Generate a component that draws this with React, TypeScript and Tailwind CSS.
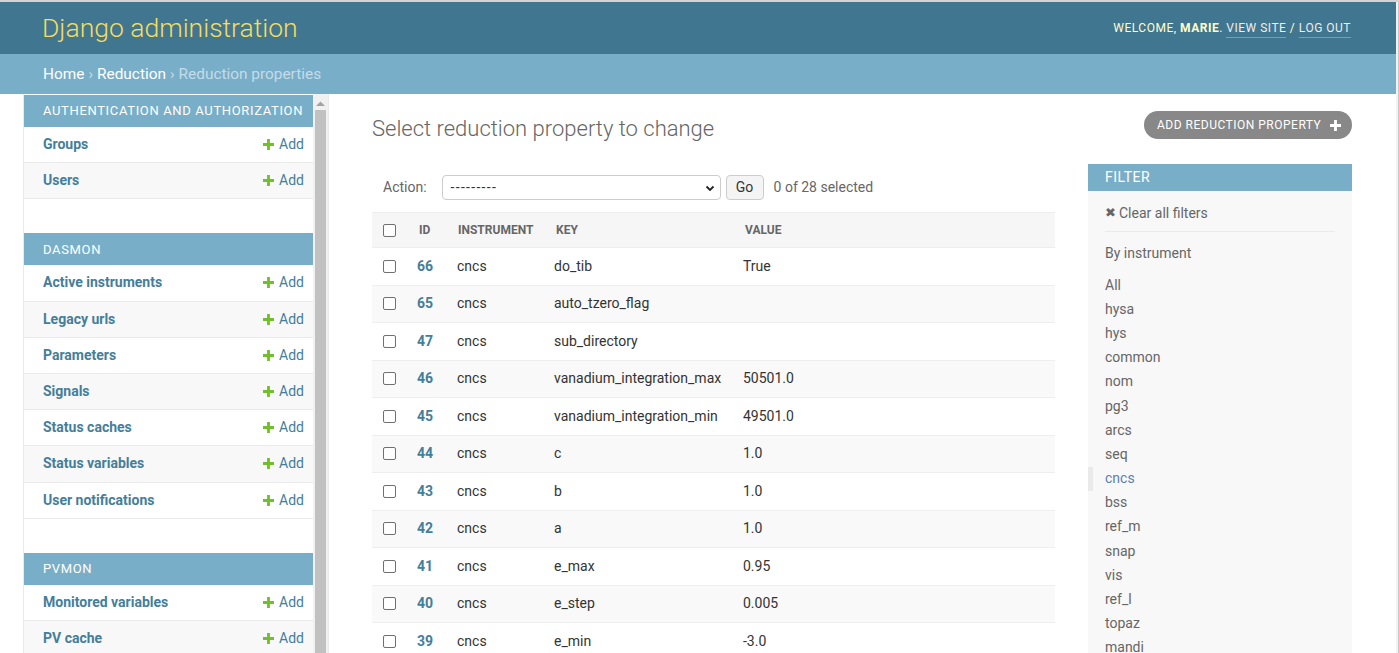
import React from "react";

const Plus = ({ color = "#70bf2b", size = 11 }: { color?: string; size?: number }) => (
  <svg width={size} height={size} viewBox="0 0 14 14" className="shrink-0">
    <path d="M5.2 0h3.6v5.2H14v3.6H8.8V14H5.2V8.8H0V5.2h5.2z" fill={color} />
  </svg>
);

const Box = () => (
  <span className="block w-[13px] h-[13px] border border-[#707070] rounded-[2px] bg-white" />
);

type Mod = { title: string; rows: string[] };
const modules: Mod[] = [
  { title: "Authentication and Authorization", rows: ["Groups", "Users"] },
  {
    title: "Dasmon",
    rows: [
      "Active instruments",
      "Legacy urls",
      "Parameters",
      "Signals",
      "Status caches",
      "Status variables",
      "User notifications",
    ],
  },
  { title: "Pvmon", rows: ["Monitored variables", "PV cache"] },
];

const rows: [string, string, string, string][] = [
  ["66", "cncs", "do_tib", "True"],
  ["65", "cncs", "auto_tzero_flag", ""],
  ["47", "cncs", "sub_directory", ""],
  ["46", "cncs", "vanadium_integration_max", "50501.0"],
  ["45", "cncs", "vanadium_integration_min", "49501.0"],
  ["44", "cncs", "c", "1.0"],
  ["43", "cncs", "b", "1.0"],
  ["42", "cncs", "a", "1.0"],
  ["41", "cncs", "e_max", "0.95"],
  ["40", "cncs", "e_step", "0.005"],
  ["39", "cncs", "e_min", "-3.0"],
];

const filters = [
  "All",
  "hysa",
  "hys",
  "common",
  "nom",
  "pg3",
  "arcs",
  "seq",
  "cncs",
  "bss",
  "ref_m",
  "snap",
  "vis",
  "ref_l",
  "topaz",
  "mandi",
];

export default function App() {
  return (
    <div className="w-[1399px] h-[653px] overflow-hidden bg-white font-[Roboto,'Liberation_Sans',sans-serif] border-t-2 border-[#d4d4d4] flex">
      <div className="w-[1396px] shrink-0 flex flex-col">
        {/* header */}
        <div className="h-[52px] shrink-0 bg-[#417690] flex items-center justify-between pl-[42px] pr-[45px]">
          <div className="text-[26.5px] font-light text-[#f5dd5d] leading-none">Django administration</div>
          <div className="text-[12px] tracking-[0.5px] uppercase text-[#ffc] leading-none">
            Welcome, <strong className="font-bold text-[#ffc]">Marie</strong>.{" "}
            <span className="text-[#eee] border-b border-white/30 pb-[2px]">View site</span> /{" "}
            <span className="text-[#eee] border-b border-white/30 pb-[2px]">Log out</span>
          </div>
        </div>
        {/* breadcrumbs */}
        <div className="h-[40px] shrink-0 bg-[#79aec8] flex items-center pl-[43px] pt-[1px] text-[15.4px] text-[#c4dce8]">
          <span className="text-white">Home</span>
          <span className="mx-[4px]">›</span>
          <span className="text-white">Reduction</span>
          <span className="mx-[4px]">›</span>
          <span>Reduction properties</span>
        </div>
        {/* body */}
        <div className="flex flex-1 min-h-0">
          <div className="w-[24px] shrink-0 border-r border-[#eaeaea]" />
          <div className="w-[305px] shrink-0 border-r border-[#eaeaea] flex">
            <div className="w-[289px] pt-[1px] flex flex-col gap-[34px]">
              {modules.map((m) => (
                <div key={m.title}>
                  <div className="h-[32px] bg-[#79aec8] text-white text-[13px] uppercase tracking-[0.65px] flex items-center pl-[19px]">
                    {m.title}
                  </div>
                  {m.rows.map((r, i) => (
                    <div
                      key={r}
                      className={`h-[36.2px] border-b border-[#eaeaea] flex items-center justify-between pl-[19px] pr-[9px] text-[14px] ${
                        i % 2 === 1 ? "bg-[#f8f8f8]" : "bg-white"
                      }`}
                    >
                      <span className="font-bold text-[#447e9b]">{r}</span>
                      <span className="flex items-center gap-[5px] text-[#447e9b]">
                        <Plus />
                        Add
                      </span>
                    </div>
                  ))}
                </div>
              ))}
            </div>
            {/* fake scrollbar */}
            <div className="w-[15px] bg-[#f1f1f1] flex flex-col items-center">
              <svg width="9" height="6" viewBox="0 0 9 6" className="mt-[7px]">
                <path d="M0 5L4.5 0.5 9 5z" fill="#a3a3a3" />
              </svg>
              <div className="mt-[3px] w-[11px] flex-1 bg-[#c1c1c1]" />
            </div>
          </div>
          {/* main */}
          <div className="flex-1 pl-[43px] pr-[44px] pt-[20px]">
            <div className="flex justify-between items-start">
              <h1 className="text-[22px] font-light text-[#666] leading-[30px]">
                Select reduction property to change
              </h1>
              <div className="-mt-[3px] h-[28px] rounded-full bg-[#888] text-white text-[12px] uppercase tracking-[0.5px] flex items-center gap-[9px] pl-[13px] pr-[9px] w-[208px]">
                Add reduction property
                <Plus color="#fff" size={11} />
              </div>
            </div>
            <div className="flex mt-[20px] gap-[33px]">
              <div className="w-[683px] shrink-0">
                {/* actions */}
                <div className="h-[48px] flex items-start pt-[11px] pl-[11px] text-[14px] text-[#666]">
                  <span className="leading-[25px]">Action:</span>
                  <div className="ml-[15px] w-[279px] h-[25px] border border-[#ccc] rounded-[4px] flex items-center justify-between pl-[8px] pr-[5px] text-[#333] text-[14px]">
                    <span className="tracking-[1.3px]">---------</span>
                    <svg width="10" height="10" viewBox="0 0 10 10">
                      <path d="M1.5 3.5L5 7 8.5 3.5" fill="none" stroke="#222" strokeWidth="1.8" />
                    </svg>
                  </div>
                  <div className="ml-[5px] w-[38px] h-[25px] border border-[#ccc] rounded-[4px] bg-[#f4f4f4] flex items-center justify-center text-[#333] text-[14px]">
                    Go
                  </div>
                  <span className="ml-[10px] leading-[25px] text-[#666]">0 of 28 selected</span>
                </div>
                {/* table */}
                <div className="h-[36px] bg-[#f6f6f6] border-t border-b border-[#eee] flex items-center text-[12px] font-bold uppercase text-[#666]">
                  <div className="w-[37px] pl-[11px]">
                    <Box />
                  </div>
                  <div className="w-[40px] pl-[10px]">ID</div>
                  <div className="w-[97px] pl-[9px]">Instrument</div>
                  <div className="w-[189px] pl-[10px]">Key</div>
                  <div className="pl-[10px]">Value</div>
                </div>
                {rows.map((r, i) => (
                  <div
                    key={r[0]}
                    className={`h-[37.5px] border-b border-[#eee] flex items-center text-[14px] text-[#333] ${
                      i % 2 === 1 ? "bg-[#f9f9f9]" : "bg-white"
                    }`}
                  >
                    <div className="w-[37px] pl-[11px]">
                      <Box />
                    </div>
                    <div className="w-[40px] pl-[8px] font-bold text-[#447e9b]">{r[0]}</div>
                    <div className="w-[97px] pl-[8px]">{r[1]}</div>
                    <div className="w-[189px] pl-[8px]">{r[2]}</div>
                    <div className="pl-[8px]">{r[3]}</div>
                  </div>
                ))}
              </div>
              {/* filter */}
              <div className="w-[264px] shrink-0 bg-[#f8f8f8] self-start pb-[40px]">
                <div className="h-[27px] bg-[#79aec8] text-white text-[14px] uppercase tracking-[0.5px] flex items-center pl-[17px]">
                  Filter
                </div>
                <div className="mx-[17px] h-[41px] border-b border-[#eaeaea] flex items-center pt-[4px] text-[14px] text-[#666]">
                  <span className="text-[13px] mr-[3px]">✖</span>Clear all filters
                </div>
                <div className="mt-[11px] pl-[17px] h-[20px] leading-[20px] text-[14px] text-[#666]">By instrument</div>
                <div className="mt-[10px]">
                  {filters.map((f) => (
                    <div
                      key={f}
                      className={`h-[24.2px] flex items-center text-[14px] ${
                        f === "cncs"
                          ? "border-l-[5px] border-[#eaeaea] pl-[12px] text-[#5b80b2]"
                          : "pl-[17px] text-[#666]"
                      }`}
                    >
                      {f}
                    </div>
                  ))}
                </div>
              </div>
            </div>
          </div>
        </div>
      </div>
      <div className="w-[3px] shrink-0 bg-[#f3f3f3] border-r border-[#c8c8c8]" />
    </div>
  );
}
